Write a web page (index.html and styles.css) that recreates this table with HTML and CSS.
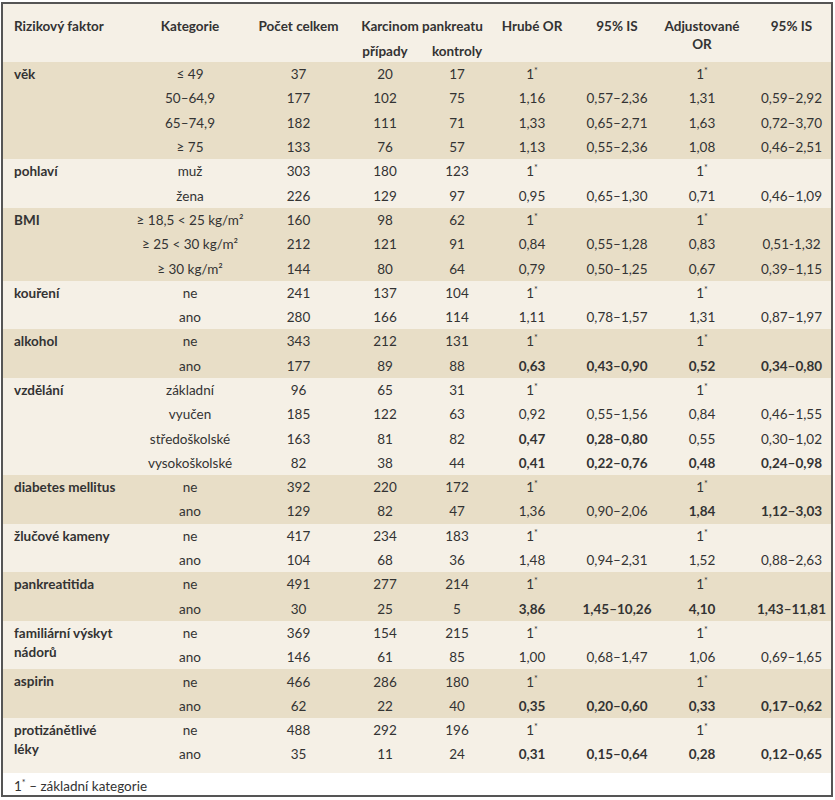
FILE: index.html
```html
<!DOCTYPE html>
<html lang="cs">
<head>
    <meta charset="UTF-8">
    <meta name="viewport" content="width=device-width, initial-scale=1.0">
    <title>Rizikové faktory karcinomu pankreatu</title>
    <link rel="stylesheet" href="styles.css">
</head>
<body>

    <div class="frame">
        <table class="risk-table">
            <colgroup>
                <col class="c-factor">
                <col class="c-cat">
                <col class="c-total">
                <col class="c-cases">
                <col class="c-ctrl">
                <col class="c-or">
                <col class="c-ci">
                <col class="c-aor">
                <col class="c-aci">
            </colgroup>
            <thead>
                <tr class="head-top">
                    <th rowspan="2" class="factor">Rizikový faktor</th>
                    <th rowspan="2">Kategorie</th>
                    <th rowspan="2">Počet celkem</th>
                    <th colspan="2">Karcinom pankreatu</th>
                    <th rowspan="2">Hrubé OR</th>
                    <th rowspan="2">95% IS</th>
                    <th rowspan="2">Adjustované OR</th>
                    <th rowspan="2" class="last">95% IS</th>
                </tr>
                <tr class="head-sub">
                    <th>případy</th>
                    <th>kontroly</th>
                </tr>
            </thead>

            <tbody class="dark">
                <tr><td rowspan="4" class="factor">věk</td><td>≤ 49</td><td>37</td><td>20</td><td>17</td><td>1<sup>*</sup></td><td></td><td>1<sup>*</sup></td><td class="last"></td></tr>
                <tr><td>50–64,9</td><td>177</td><td>102</td><td>75</td><td>1,16</td><td>0,57–2,36</td><td>1,31</td><td class="last">0,59–2,92</td></tr>
                <tr><td>65–74,9</td><td>182</td><td>111</td><td>71</td><td>1,33</td><td>0,65–2,71</td><td>1,63</td><td class="last">0,72–3,70</td></tr>
                <tr><td>≥ 75</td><td>133</td><td>76</td><td>57</td><td>1,13</td><td>0,55–2,36</td><td>1,08</td><td class="last">0,46–2,51</td></tr>
            </tbody>
            <tbody class="light">
                <tr><td rowspan="2" class="factor">pohlaví</td><td>muž</td><td>303</td><td>180</td><td>123</td><td>1<sup>*</sup></td><td></td><td>1<sup>*</sup></td><td class="last"></td></tr>
                <tr><td>žena</td><td>226</td><td>129</td><td>97</td><td>0,95</td><td>0,65–1,30</td><td>0,71</td><td class="last">0,46–1,09</td></tr>
            </tbody>
            <tbody class="dark">
                <tr><td rowspan="3" class="factor">BMI</td><td>≥ 18,5 &lt; 25 kg/m²</td><td>160</td><td>98</td><td>62</td><td>1<sup>*</sup></td><td></td><td>1<sup>*</sup></td><td class="last"></td></tr>
                <tr><td>≥ 25 &lt; 30 kg/m²</td><td>212</td><td>121</td><td>91</td><td>0,84</td><td>0,55–1,28</td><td>0,83</td><td class="last">0,51-1,32</td></tr>
                <tr><td>≥ 30 kg/m²</td><td>144</td><td>80</td><td>64</td><td>0,79</td><td>0,50–1,25</td><td>0,67</td><td class="last">0,39–1,15</td></tr>
            </tbody>
            <tbody class="light">
                <tr><td rowspan="2" class="factor">kouření</td><td>ne</td><td>241</td><td>137</td><td>104</td><td>1<sup>*</sup></td><td></td><td>1<sup>*</sup></td><td class="last"></td></tr>
                <tr><td>ano</td><td>280</td><td>166</td><td>114</td><td>1,11</td><td>0,78–1,57</td><td>1,31</td><td class="last">0,87–1,97</td></tr>
            </tbody>
            <tbody class="dark">
                <tr><td rowspan="2" class="factor">alkohol</td><td>ne</td><td>343</td><td>212</td><td>131</td><td>1<sup>*</sup></td><td></td><td>1<sup>*</sup></td><td class="last"></td></tr>
                <tr><td>ano</td><td>177</td><td>89</td><td>88</td><td class="sig">0,63</td><td class="sig">0,43–0,90</td><td class="sig">0,52</td><td class="sig last">0,34–0,80</td></tr>
            </tbody>
            <tbody class="light">
                <tr><td rowspan="4" class="factor">vzdělání</td><td>základní</td><td>96</td><td>65</td><td>31</td><td>1<sup>*</sup></td><td></td><td>1<sup>*</sup></td><td class="last"></td></tr>
                <tr><td>vyučen</td><td>185</td><td>122</td><td>63</td><td>0,92</td><td>0,55–1,56</td><td>0,84</td><td class="last">0,46–1,55</td></tr>
                <tr><td>středoškolské</td><td>163</td><td>81</td><td>82</td><td class="sig">0,47</td><td class="sig">0,28–0,80</td><td>0,55</td><td class="last">0,30–1,02</td></tr>
                <tr><td>vysokoškolské</td><td>82</td><td>38</td><td>44</td><td class="sig">0,41</td><td class="sig">0,22–0,76</td><td class="sig">0,48</td><td class="sig last">0,24–0,98</td></tr>
            </tbody>
            <tbody class="dark">
                <tr><td rowspan="2" class="factor">diabetes mellitus</td><td>ne</td><td>392</td><td>220</td><td>172</td><td>1<sup>*</sup></td><td></td><td>1<sup>*</sup></td><td class="last"></td></tr>
                <tr><td>ano</td><td>129</td><td>82</td><td>47</td><td>1,36</td><td>0,90–2,06</td><td class="sig">1,84</td><td class="sig last">1,12–3,03</td></tr>
            </tbody>
            <tbody class="light">
                <tr><td rowspan="2" class="factor">žlučové kameny</td><td>ne</td><td>417</td><td>234</td><td>183</td><td>1<sup>*</sup></td><td></td><td>1<sup>*</sup></td><td class="last"></td></tr>
                <tr><td>ano</td><td>104</td><td>68</td><td>36</td><td>1,48</td><td>0,94–2,31</td><td>1,52</td><td class="last">0,88–2,63</td></tr>
            </tbody>
            <tbody class="dark">
                <tr><td rowspan="2" class="factor">pankreatitida</td><td>ne</td><td>491</td><td>277</td><td>214</td><td>1<sup>*</sup></td><td></td><td>1<sup>*</sup></td><td class="last"></td></tr>
                <tr><td>ano</td><td>30</td><td>25</td><td>5</td><td class="sig">3,86</td><td class="sig">1,45–10,26</td><td class="sig">4,10</td><td class="sig last">1,43–11,81</td></tr>
            </tbody>
            <tbody class="light">
                <tr><td rowspan="2" class="factor">familiární výskyt nádorů</td><td>ne</td><td>369</td><td>154</td><td>215</td><td>1<sup>*</sup></td><td></td><td>1<sup>*</sup></td><td class="last"></td></tr>
                <tr><td>ano</td><td>146</td><td>61</td><td>85</td><td>1,00</td><td>0,68–1,47</td><td>1,06</td><td class="last">0,69–1,65</td></tr>
            </tbody>
            <tbody class="dark">
                <tr><td rowspan="2" class="factor">aspirin</td><td>ne</td><td>466</td><td>286</td><td>180</td><td>1<sup>*</sup></td><td></td><td>1<sup>*</sup></td><td class="last"></td></tr>
                <tr><td>ano</td><td>62</td><td>22</td><td>40</td><td class="sig">0,35</td><td class="sig">0,20–0,60</td><td class="sig">0,33</td><td class="sig last">0,17–0,62</td></tr>
            </tbody>
            <tbody class="light">
                <tr><td rowspan="2" class="factor">protizánětlivé léky</td><td>ne</td><td>488</td><td>292</td><td>196</td><td>1<sup>*</sup></td><td></td><td>1<sup>*</sup></td><td class="last"></td></tr>
                <tr><td>ano</td><td>35</td><td>11</td><td>24</td><td class="sig">0,31</td><td class="sig">0,15–0,64</td><td class="sig">0,28</td><td class="sig last">0,12–0,65</td></tr>
                <tr class="spacer"><td colspan="9"></td></tr>
            </tbody>
        </table>
        <p class="note">1<sup>*</sup> – základní kategorie</p>
    </div>

</body>
</html>
```

FILE: styles.css
```css
body {
    margin: 0;
    font-family: Lato, "Open Sans", sans-serif;
    font-size: 13.5px;
    color: #333;
}

.frame {
    width: 832px;
    height: 795px;
    box-sizing: border-box;
    margin: 2px 0 0 1px;
    border: 2px solid #555;
    background-color: #fff;
}

.risk-table {
    width: 828px;
    border-collapse: collapse;
    table-layout: fixed;
}

.c-factor { width: 130px; }
.c-cat { width: 114px; }
.c-total { width: 103px; }
.c-cases { width: 70px; }
.c-ctrl { width: 74px; }
.c-or { width: 76px; }
.c-ci { width: 94px; }
.c-aor { width: 76px; }
.c-aci { width: 91px; }

thead {
    background-color: #f5f0e6;
}

th {
    font-weight: 700;
    text-align: center;
    line-height: 18px;
    padding: 0;
}

.head-top th {
    height: 36px;
    vertical-align: top;
    padding-top: 13px;
    box-sizing: border-box;
}

.head-sub th {
    height: 22px;
    vertical-align: middle;
}

th.factor {
    text-align: left;
    padding-left: 11px;
}

td {
    height: 24.3px;
    padding: 0;
    text-align: center;
    vertical-align: middle;
    line-height: 18px;
    white-space: nowrap;
}

td.factor {
    text-align: left;
    vertical-align: top;
    font-weight: 700;
    padding: 3px 12px 0 11px;
    line-height: 19px;
    white-space: normal;
}

th.last,
td.last {
    padding-left: 12px;
}

.head-top th.last {
    padding-left: 12px;
}

.sig {
    font-weight: 700;
}

sup {
    font-size: 9px;
    line-height: 0;
    vertical-align: 5px;
}

.dark {
    background-color: #e8dec7;
}

.light {
    background-color: #f5f0e6;
}

.spacer td {
    height: 6px;
}

.note {
    margin: 0;
    padding: 4px 0 0 11px;
    line-height: 18px;
}
```
